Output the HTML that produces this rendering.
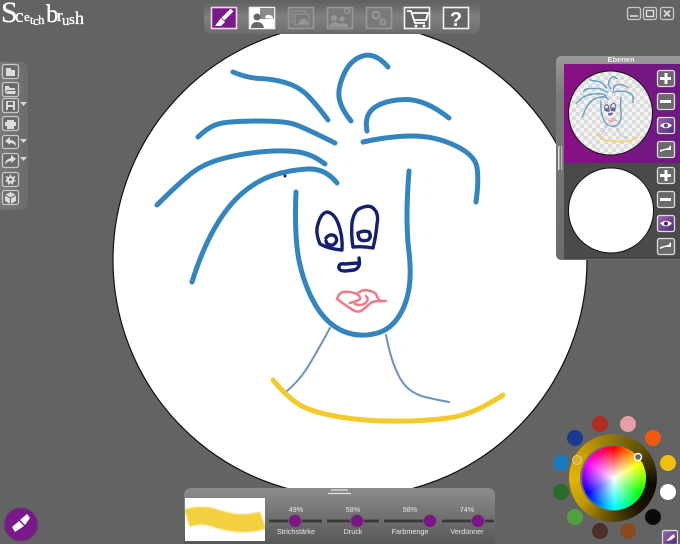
<!DOCTYPE html>
<html><head><meta charset="utf-8">
<style>
html,body{margin:0;padding:0;background:#636363;width:680px;height:544px;overflow:hidden}
svg{position:absolute;left:0;top:0}
.ring{position:absolute;left:569px;top:434px;width:88px;height:88px;border-radius:50%;background:conic-gradient(#8a7510 0deg,#5a4a05 50deg,#0c0a00 100deg,#1a1500 140deg,#6a5505 190deg,#c09a00 230deg,#e0b400 270deg,#c8a000 310deg,#8a7510 360deg)}
.gap{position:absolute;left:580px;top:445px;width:66px;height:66px;border-radius:50%;background:#707060}
.wheel{position:absolute;left:582px;top:446px;width:64px;height:64px;border-radius:50%;background:radial-gradient(circle,#fff 0%,rgba(255,255,255,.5) 30%,rgba(255,255,255,0) 65%),conic-gradient(#f00,#ff0 60deg,#0f0 120deg,#0ff 180deg,#00f 240deg,#f0f 300deg,#f00)}
.n{stroke-width:calc(2px*var(--k,1))}
.b{stroke-width:calc(5px*var(--k,1))}
.e{stroke-width:calc(3.4px*var(--k,1))}
.p{stroke-width:calc(2.5px*var(--k,1))}
.y{stroke-width:calc(5px*var(--k,1))}
</style></head>
<body>
<svg width="680" height="544" viewBox="0 0 680 544" font-family="'Liberation Sans',sans-serif">
<defs>
<linearGradient id="tb" x1="0" y1="0" x2="0" y2="1"><stop offset="0" stop-color="#606060"/><stop offset=".5" stop-color="#808080"/><stop offset="1" stop-color="#6c6c6c"/></linearGradient>
<linearGradient id="lb" x1="0" y1="0" x2="1" y2="0"><stop offset="0" stop-color="#7c7c7c"/><stop offset="1" stop-color="#6c6c6c"/></linearGradient>
<linearGradient id="bp" x1="0" y1="0" x2="0" y2="1"><stop offset="0" stop-color="#8c8c8c"/><stop offset="1" stop-color="#585858"/></linearGradient>
<linearGradient id="lp" x1="0" y1="0" x2="0" y2="1"><stop offset="0" stop-color="#9a9a9a"/><stop offset=".2" stop-color="#7a7a7a"/><stop offset="1" stop-color="#6c6c6c"/></linearGradient>
<linearGradient id="pur" x1="0" y1="0" x2="1" y2="0"><stop offset="0" stop-color="#8a0f86"/><stop offset="1" stop-color="#6c1a80"/></linearGradient>
<linearGradient id="eye" x1="0" y1="0" x2="1" y2="1"><stop offset="0" stop-color="#9a6ab0"/><stop offset="1" stop-color="#4e2a70"/></linearGradient>
<filter id="soft" filterUnits="userSpaceOnUse" x="175" y="490" width="100" height="60"><feGaussianBlur stdDeviation="0.9"/></filter>
<clipPath id="pv"><rect x="185" y="498" width="80" height="43"/></clipPath>
<pattern id="chk" width="8" height="8" patternUnits="userSpaceOnUse"><rect width="8" height="8" fill="#f2f2f2"/><rect width="4" height="4" fill="#dcdcdc"/><rect x="4" y="4" width="4" height="4" fill="#dcdcdc"/></pattern>
<g id="art" fill="none" stroke-linecap="round" stroke-linejoin="round">
<g stroke="#6a94bd" class="n">
<path d="M330 328Q318 350 309 365Q300 380 287 391"/>
<path d="M386 335Q391 360 397 372Q405 392 425 397Q437 400 449 402"/>
</g>
<g stroke="#3485be" class="b">
<path d="M233 72Q247 78 260 78.500Q273 79 285 82.500Q297 86 305 93Q313 100 328 120"/>
<path d="M198 137Q210 125 222.500 123Q235 121 260 121Q285 121 295 124.500Q305 128 335 143"/>
<path d="M157 205Q180 182 192.500 172.500Q205 163 225 158Q245 153 265 151.500Q285 150 298.500 152Q312 154 325 164"/>
<path d="M192 282Q202 250 215 227.500Q228 205 243 192.500Q258 180 274 175Q290 170 307.500 169Q325 168 337 183"/>
<path d="M388 67Q375 52 362.500 56Q350 60 343.500 75Q337 90 339.500 100Q342 110 351 121"/>
<path d="M367 131Q364 115 374.500 107.500Q385 100 405 99.500Q425 99 449 118"/>
<path d="M363 142Q390 136 412.500 136Q435 136 455 145.500Q475 155 477 167.500Q479 180 476 202"/>
<path d="M296 192Q294 240 300 265Q306 290 317 307.500Q328 325 344 331.500Q360 338 377.500 333Q395 328 404 306.500Q413 285 409 252.500Q405 220 409 171"/>
</g>
<g stroke="#14206e" class="e">
<path d="M342 250Q329 249 320 244Q315 232 318 224Q321 213 327 212Q334 213 338 223Q343 236 342 250Z"/>
<path d="M326 238Q330 233 335 236Q339 241 333 245Q327 246 326 241"/>
<path d="M353 247Q351 235 352 223Q354 210 361 208Q370 204 374 209Q379 214 377 224Q376 236 373 248Q363 246 353 247Z"/>
<path d="M358 233Q364 230 369 232Q372 237 368 240Q361 242 359 238Q358 235 358 233"/>
<path d="M359 258Q361 268 354 270L345 271Q338 271 339 266Q340 263 345 264L358 263"/>
</g>
<g stroke="#ee7a88" class="p">
<path d="M337 299Q339 293 343 292Q350 291 357 294Q361 290 366 290Q373 291 376 294Q378 300 381 301L386 301"/>
<path d="M337 299Q345 305 350 308Q356 313 361 311Q366 307 372 302Q376 301 381 301"/>
<path d="M357 294Q362 298 359 300Q354 302 350 303M366 296Q370 300 364 304Q360 306 355 304"/>
</g>
<path stroke="#f2ca2c" class="y" d="M273 380Q285 395 297.500 403.500Q310 412 340 417Q370 422 407.500 421Q445 420 462.500 415Q480 410 503 395"/>
<circle cx="285" cy="176" r="1.500" fill="#14206e" stroke="none"/>
</g>
</defs>

<rect width="680" height="544" fill="#636363"/>
<circle cx="350" cy="260" r="237" fill="#fff" stroke="#111" stroke-width="1.200"/>
<use href="#art"/>

<!-- logo -->
<g fill="#fff" stroke="#fff" stroke-width=".3" font-family="'Liberation Serif',serif">
<text x="1" y="22" font-size="30">S</text>
<text x="15" y="22" font-size="19">c</text>
<text x="24" y="21" font-size="13">e</text>
<text x="30" y="24" font-size="12">t</text>
<text x="33" y="25" font-size="13">c</text>
<text x="38" y="24" font-size="13">h</text>
<text x="46" y="22" font-size="25">b</text>
<text x="57" y="21" font-size="17">r</text>
<text x="62" y="25" font-size="15">u</text>
<text x="69" y="24" font-size="15">s</text>
<text x="75" y="24" font-size="18">h</text>
</g>

<!-- top toolbar -->
<rect x="204" y="1" width="276" height="33" rx="7" fill="url(#tb)"/>
<g fill="none" stroke-width="1.600">
<rect x="211.500" y="7.500" width="25" height="21" fill="#7a1a8a" stroke="#e8d8ea"/>
<path d="M232 10L223 19" stroke="#fff" stroke-width="4"/>
<path d="M221 18L225 22L221 26L215 26Z" fill="#fff" stroke="none"/>
<rect x="249.500" y="7.500" width="25" height="21" fill="#fff" stroke="#eee"/>
<rect x="260" y="8" width="14" height="11" fill="#8a8a8a" stroke="none"/>
<circle cx="257" cy="17" r="3.500" fill="#666" stroke="none"/>
<path d="M251 28Q251 22 257 22Q263 22 264 28Z" fill="#666" stroke="none"/>
<path d="M265 18Q266 14 269 15Q273 15 273 19Z" fill="#fff" stroke="none"/>
<g stroke="#969696">
<rect x="288.500" y="7.500" width="25" height="21" fill="#7a7a7a"/>
<rect x="292" y="11" width="14" height="11" stroke-width="1"/><rect x="295" y="14" width="14" height="11" fill="#7a7a7a" stroke-width="1"/>
<path d="M298 24Q300 18 303 19Q307 18 308 24Z" fill="#969696" stroke="none"/>
<rect x="327.500" y="7.500" width="25" height="21" fill="#7a7a7a"/>
<circle cx="334" cy="18" r="3" fill="#969696" stroke="none"/><path d="M329 27Q330 22 335 22Q340 22 340 27Z" fill="#969696" stroke="none"/>
<circle cx="342" cy="19" r="2.600" fill="#969696" stroke="none"/><path d="M339 27Q339 23 343 23Q348 23 348 27Z" fill="#969696" stroke="none"/>
<circle cx="347" cy="11" r="2.500" stroke-width="1.400"/>
<rect x="366.500" y="7.500" width="25" height="21" fill="#7a7a7a"/>
<circle cx="376" cy="15" r="3.500" stroke-width="2.200"/><circle cx="383" cy="22" r="2.600" stroke-width="2"/>
</g>
<rect x="404.500" y="7.500" width="25" height="21" fill="#666" stroke="#f2f2f2"/>
<path d="M407 11L411 11L415 23L425 23M412 13L428 13L426 20L414 20" stroke="#fff" stroke-width="1.800"/>
<circle cx="416" cy="26" r="1.400" fill="#fff" stroke="none"/><circle cx="424" cy="26" r="1.400" fill="#fff" stroke="none"/>
<rect x="443.500" y="7.500" width="25" height="21" fill="#666" stroke="#f2f2f2"/>
</g>
<text x="456" y="26" font-size="20" font-weight="bold" fill="#fff" text-anchor="middle">?</text>

<!-- window buttons -->
<g fill="#666" stroke="#c8c8c8" stroke-width="1.300">
<rect x="627.500" y="7.500" width="13" height="12" rx="2"/>
<rect x="643.500" y="7.500" width="13" height="12" rx="2"/>
<rect x="660.500" y="7.500" width="13" height="12" rx="2"/>
</g>
<path d="M630 16H638" stroke="#ddd" stroke-width="1.600"/>
<rect x="646.500" y="10.500" width="7" height="6" fill="none" stroke="#ddd" stroke-width="1.400"/>
<path d="M664 10.500L670 16.500M670 10.500L664 16.500" stroke="#ddd" stroke-width="1.800"/>

<!-- left toolbar -->
<rect x="-6" y="62" width="34" height="148" rx="6" fill="url(#lb)"/>
<g fill="#6a6a6a" stroke="#c8c8c8" stroke-width="1.300">
<rect x="2.500" y="64.500" width="16" height="14" rx="2"/>
<rect x="2.500" y="82.500" width="16" height="14" rx="2"/>
<rect x="2.500" y="98.500" width="16" height="14" rx="2"/>
<rect x="2.500" y="116.500" width="16" height="14" rx="2"/>
<rect x="2.500" y="135.500" width="16" height="13" rx="2"/>
<rect x="2.500" y="153.500" width="16" height="14" rx="2"/>
<rect x="2.500" y="172.500" width="16" height="14" rx="2"/>
<rect x="2.500" y="190.500" width="16" height="14" rx="2"/>
</g>
<g fill="#dcdcdc">
<path d="M6 68H11V70H15V76H6Z"/>
<path d="M5 86H9L10 88H15V90H7L5 94Z"/><path d="M7 91H16L15 94H6Z"/>
<path d="M6 101H15V110H6Z"/>
<rect x="7" y="120" width="7" height="2"/><rect x="5" y="122" width="11" height="4"/><rect x="7" y="126" width="7" height="3"/>
<path d="M5 141L10 137V140Q16 140 16 146Q14 143 10 143V145Z"/>
<path d="M16 159L11 155V158Q5 159 5 165Q7 161 11 161V163Z"/>
<path d="M10.500 174L12 177L15.500 176L14 179.500L16 181L13.500 182L12.500 185L10.500 183L8.500 185L7.500 182L5 181L7 179.500L5.500 176L9 177Z"/>
<path d="M10.500 192L16 195V201L10.500 204L5 201V195Z"/>
</g>
<path d="M8 102H13V105H8Z" fill="#6a6a6a"/><rect x="8" y="107" width="5" height="3" fill="#6a6a6a"/>
<circle cx="10.500" cy="179.500" r="1.500" fill="#6a6a6a"/>
<path d="M5 195L10.500 198L16 195M10.500 198V204" stroke="#6a6a6a" fill="none"/>
<path d="M20 102H27L23.500 106ZM20 139H27L23.500 143ZM20 157H27L23.500 161Z" fill="#d8d8d8"/>

<!-- layers panel -->
<path d="M680 56H562Q556 56 556 62V254Q556 260 562 260H680Z" fill="url(#lp)"/>
<rect x="564" y="64" width="116" height="99" fill="url(#pur)"/>
<rect x="564" y="163" width="116" height="96" fill="#4a4a4a"/>
<text x="621" y="62" font-size="7.500" font-weight="bold" fill="#f0f0f0" text-anchor="middle">Ebenen</text>
<rect x="558" y="146" width="1.500" height="24" fill="#ddd"/><rect x="561" y="146" width="1.200" height="24" fill="#bbb"/>
<circle cx="610.500" cy="113" r="42" fill="url(#chk)" stroke="#111" stroke-width="1"/>
<use href="#art" style="--k:1.600" opacity=".72" transform="translate(610.500 113) scale(.177) translate(-350 -260)"/>
<circle cx="611" cy="210.500" r="42.500" fill="#fff" stroke="#111" stroke-width="1"/>
<g fill="#6a6a6a" stroke="#dcdcdc" stroke-width="1.300">
<rect x="657.500" y="70.500" width="17" height="16" rx="2"/>
<rect x="657.500" y="93.500" width="17" height="16" rx="2"/>
<rect x="657.500" y="117.500" width="17" height="16" rx="2" fill="url(#eye)"/>
<rect x="657.500" y="141.500" width="17" height="16" rx="2"/>
<rect x="657.500" y="167.500" width="17" height="16" rx="2"/>
<rect x="657.500" y="191.500" width="17" height="16" rx="2"/>
<rect x="657.500" y="215.500" width="17" height="16" rx="2" fill="url(#eye)"/>
<rect x="657.500" y="238.500" width="17" height="16" rx="2"/>
</g>
<g fill="#fff">
<path d="M664.500 73H667.500V77H671V80H667.500V84H664.500V80H660V77H664.500Z"/>
<rect x="660" y="100" width="11" height="3"/>
<path d="M664.500 170H667.500V174H671V177H667.500V181H664.500V177H660V174H664.500Z"/>
<rect x="660" y="198" width="11" height="3"/>
<path d="M660 125.500Q666 120 672 125.500Q666 131 660 125.500Z"/>
<path d="M660 223.500Q666 218 672 223.500Q666 229 660 223.500Z"/>
<path d="M660 150L668 148L671 145V147L671 150H665L660 152Z"/>
<path d="M660 247L668 245L671 242V244L671 247H665L660 249Z"/>
</g>
<circle cx="666" cy="125.500" r="2" fill="#6a3a8a"/><circle cx="666" cy="223.500" r="2" fill="#4e2a70"/>

<!-- bottom panel -->
<path d="M184 544V496Q184 488 192 488H487Q495 488 495 496V544Z" fill="url(#bp)"/>
<path d="M331 490H348M328 493.500H351" stroke="#e2e2e2" stroke-width="1.200"/>
<rect x="185" y="498" width="80" height="43" fill="#fff"/>
<g clip-path="url(#pv)">
<path d="M187 518Q200 514 212 517Q225 522 238 523Q252 524 263 520" fill="none" stroke="#f3d03e" stroke-width="18" filter="url(#soft)"/>
</g>
<path d="M269 521H322M327 521H379M384 521H437M442 521H494" stroke="#383838" stroke-width="2.800"/>
<g fill="#7d1488" stroke="#6a6a6a" stroke-width=".8">
<circle cx="295" cy="521" r="6.500"/><circle cx="357" cy="521" r="6.500"/><circle cx="430" cy="521" r="6.500"/><circle cx="478" cy="521" r="6.500"/>
</g>
<g font-size="7.200" fill="#e6e6e6" text-anchor="middle">
<text x="296" y="512">49%</text><text x="353" y="512">58%</text><text x="410" y="512">98%</text><text x="467" y="512">74%</text>
<text x="296" y="534">Strichstärke</text><text x="353" y="534">Druck</text><text x="410" y="534">Farbmenge</text><text x="467" y="534">Verdünner</text>
</g>

<!-- bottom-left brush -->
<circle cx="21" cy="524.500" r="17" fill="#7a1a8a" stroke="#5a5a5a"/>
<path d="M20 520L27 514L30 518L25 525Z" fill="#fff"/>
<path d="M12 527L19 521L24 526L15 532Z" fill="#fff"/>

<!-- swatches -->
<circle cx="600" cy="424" r="8" fill="#b02a20"/>
<circle cx="628" cy="424" r="8" fill="#e8a0a8"/>
<circle cx="653" cy="438" r="8" fill="#f05a10"/>
<circle cx="668" cy="463" r="8" fill="#f0c010"/>
<circle cx="668" cy="492" r="8" fill="#fff"/>
<circle cx="653" cy="517" r="8" fill="#0a0a0a"/>
<circle cx="628" cy="531" r="8" fill="#8a4a20"/>
<circle cx="600" cy="531" r="8" fill="#4a3028"/>
<circle cx="575" cy="517" r="8" fill="#50a040"/>
<circle cx="561" cy="492" r="8" fill="#2a6a2a"/>
<circle cx="561" cy="463" r="8" fill="#1a7ac0"/>
<circle cx="575" cy="438" r="8" fill="#1a3a90"/>
<rect x="662.500" y="530.500" width="15" height="14" rx="1.500" fill="url(#eye)" stroke="#ddd" stroke-width="1.200"/>
<path d="M666 541L671 536L674 534L675 537L671 540Z" fill="#fff"/>
</svg>
<div class="ring"></div><div class="gap"></div><div class="wheel"></div>
<svg width="680" height="544" viewBox="0 0 680 544">
<circle cx="638" cy="457" r="3.500" fill="#666" stroke="#fff" stroke-width="1.500"/>
<circle cx="577" cy="460" r="4.500" fill="#d8b030" stroke="#e8d080" stroke-width="1"/>
</svg>
</body></html>
